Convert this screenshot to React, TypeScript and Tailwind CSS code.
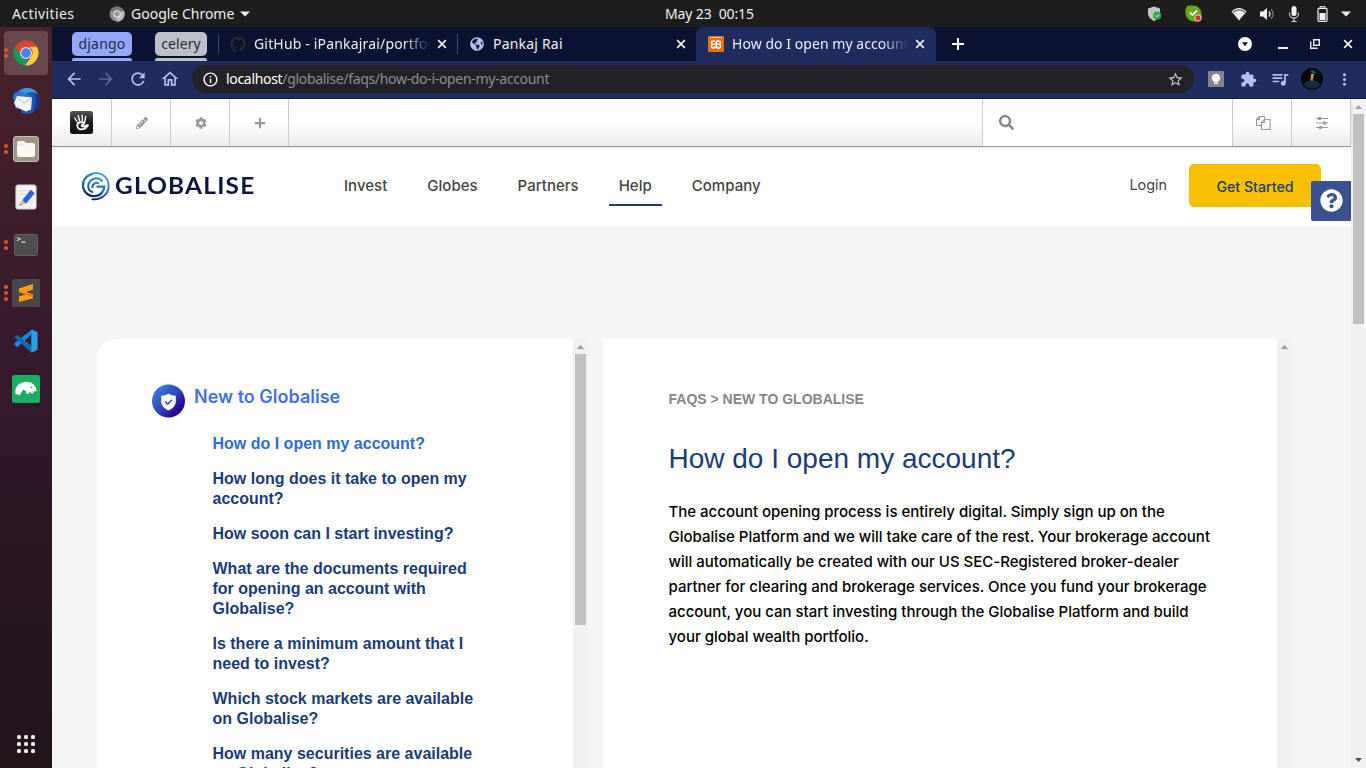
import React from "react";
import { FaGithub, FaPencilAlt, FaCog, FaPlus, FaSearch, FaQuestionCircle, FaGlobeAmericas } from "react-icons/fa";
import {
  MdArrowBack,
  MdArrowForward,
  MdRefresh,
  MdOutlineHome,
  MdInfoOutline,
  MdStarBorder,
  MdExtension,
  MdQueueMusic,
  MdMoreVert,
} from "react-icons/md";

const UI = "font-['Noto_Sans',sans-serif]";

function TopBar() {
  return (
    <div className={`flex h-[27px] shrink-0 items-center bg-[#1d1d1d] text-[14px] leading-[27px] text-[#f0f0f0] ${UI}`}>
      <div className="w-[109px] pl-3 tracking-[0.4px]">Activities</div>
      <svg className="mr-[6px] h-4 w-4" viewBox="0 0 16 16">
        <circle cx="8" cy="8" r="7.5" fill="#8d8d8d" />
        <path d="M8 8 1.5 4.3A7.5 7.5 0 0 1 14.5 4.3Z" fill="#777" />
        <path d="M8 8 14.8 4.6A7.5 7.5 0 0 1 7.6 15.5Z" fill="#bdbdbd" />
        <circle cx="8" cy="8" r="3.7" fill="#eee" />
        <circle cx="8" cy="8" r="2.8" fill="#999" />
      </svg>
      <div className="w-[104px] whitespace-nowrap tracking-[0px]">Google Chrome</div>
      <svg className="ml-[5px] h-[6px] w-[10px]" viewBox="0 0 10 6">
        <path d="M0 .5h10L5 5.5z" fill="#f0f0f0" />
      </svg>
      <div className="ml-[415px] w-[92px] whitespace-pre text-[14px] tracking-[-0.120px]">May 23  00:15</div>
      <div className="ml-auto flex items-center">
        <svg className="h-4 w-4" viewBox="0 0 16 16">
          <path d="M7 .5 13 2.5V7c0 4-3 6.500-6 8C4 13.500 1 11 1 7V2.500z" fill="#c4c4c4" />
          <circle cx="10.200" cy="9.500" r="4" fill="#2fa84a" />
          <path d="m8.500 9.500 1.300 1.300 2.300-2.400" stroke="#fff" fill="none" />
        </svg>
        <svg className="ml-[22px] h-[17px] w-[17px]" viewBox="0 0 17 17">
          <path d="M1 4.500Q1 1 4.500 1H8a7.500 7.500 0 0 1 8 8v3.500q0 3.500-3.500 3.500h-4A7.500 7.500 0 0 1 1 8.500z" fill="#66a818" stroke="#66a818" strokeLinejoin="round" />
          <path d="m5 7.500 2.500 2.500L12 5.500" stroke="#fff" strokeWidth="1.800" fill="none" />
          <circle cx="13" cy="13" r="3.200" fill="#e22" stroke="#fff" strokeWidth=".8" />
        </svg>
        <svg className="ml-[29px] h-[14px] w-4" viewBox="0 0 16 14">
          <path d="M.5 4.500C5-.2 11-.2 15.500 4.500L8 13.500z" fill="#f0f0f0" />
          <path d="M2 5.200C5.500 2 10.500 2 14 5.200" stroke="#555" strokeWidth="1.200" fill="none" />
        </svg>
        <svg className="ml-[12px] h-[14px] w-4" viewBox="0 0 16 14">
          <path d="M1 4.500h3L8 1v12L4 9.500H1z" fill="#f0f0f0" />
          <path d="M9.800 4.500c1.400 1.500 1.400 3.500 0 5" stroke="#eee" strokeWidth="1.300" fill="none" />
          <path d="M12 2.500c3 2.700 3 6.300 0 9" stroke="#888" strokeWidth="1.200" fill="none" />
        </svg>
        <svg className="ml-[14px] h-4 w-[10px]" viewBox="0 0 10 16">
          <rect x="2.500" y="0" width="5" height="10" rx="2.500" fill="#f0f0f0" />
          <path d="M.7 6.500v2c0 2.300 1.800 3.500 4.300 3.500s4.300-1.200 4.300-3.500v-2M5 12v3M2.500 15.400h5" stroke="#f0f0f0" fill="none" />
        </svg>
        <svg className="ml-[18px] h-4 w-[11px]" viewBox="0 0 11 16">
          <path d="M3 2V.7h5V2" stroke="#f0f0f0" fill="none" />
          <rect x="1" y="2.300" width="9" height="13" rx="1" stroke="#f0f0f0" strokeWidth="1.200" fill="none" />
          <rect x="2.500" y="7" width="6" height="7" fill="#f0f0f0" />
        </svg>
        <svg className="mr-[15px] ml-[13px] h-[6px] w-[10px]" viewBox="0 0 10 6">
          <path d="M0 .5h10L5 5.500z" fill="#f0f0f0" />
        </svg>
      </div>
    </div>
  );
}

function DockItem({ dots = 0, active = false, children }: { dots?: number; active?: boolean; children: React.ReactNode }) {
  return (
    <div className="flex h-12 w-[52px] items-center">
      <div className={`relative ml-[4px] flex h-11 w-11 items-center justify-center rounded-[4px] ${active ? "bg-[#68484d]" : ""}`}>
        <div className="absolute left-0 flex flex-col gap-[2px]">
          {Array.from({ length: dots }, (_, i) => (
            <span key={i} className="h-1 w-1 rounded-full bg-[#e95420]" />
          ))}
        </div>
        {children}
      </div>
    </div>
  );
}

function Dock() {
  return (
    <div className="flex w-[52px] shrink-0 flex-col bg-linear-to-b from-[#48222a] via-[#35192c] via-45% to-[#20141b] pt-[2px]">
      <DockItem dots={2} active>
        <svg className="h-[26px] w-[26px]" viewBox="0 0 48 48">
          <path d="M24 24 4 12.500A23 23 0 0 1 44 12.500L24 13z" fill="#db4437" />
          <path d="M24 1a23 23 0 0 1 20 11.500H24A11.500 11.500 0 0 0 13.500 29L4 12.500A23 23 0 0 1 24 1z" fill="#db4437" />
          <path d="M4 12.500 14 29.800A11.500 11.500 0 0 0 27 35L22 47A23 23 0 0 1 4 12.500z" fill="#0f9d58" />
          <path d="M44 12.500A23 23 0 0 1 22 47L34 29.800A11.500 11.500 0 0 0 30 13V12.500z" fill="#ffcd40" />
          <circle cx="24" cy="24" r="11" fill="#f1f1f1" />
          <circle cx="24" cy="24" r="9" fill="#4285f4" />
        </svg>
      </DockItem>
      <DockItem>
        <svg className="h-7 w-7" viewBox="0 0 28 28">
          <circle cx="14.500" cy="14" r="13" fill="#1c5ab0" />
          <path d="M6 5C12-1 22 0 26 7c-6-3-10-2-14 1z" fill="#3a9be0" />
          <path d="M20 27C30 21 29 9 22 5c3 6 2 14-2 22z" fill="#17329a" />
          <path d="M1 12C0 8 4 3 9 5l12 5-8 2z" fill="#2977cc" />
          <path d="M0 15h3v7h6v6H0z" fill="#40202c" />
          <path d="m2 16 3-7 15 1.500-1 12-5 2L4 20z" fill="#f3f3f3" />
          <path d="m5 10.500 7 5.500 8-5" stroke="#bbb" fill="none" />
        </svg>
      </DockItem>
      <DockItem dots={2}>
        <svg className="h-[26px] w-[26px]" viewBox="0 0 26 26">
          <rect x=".5" y=".5" width="25" height="25" rx="2.500" fill="#9e9684" stroke="#c4beb2" />
          <path d="M4 7q0-2 2-2h5l2 2h7q2 0 2 2v10q0 2-2 2H6q-2 0-2-2z" fill="#faf8f5" />
          <path d="M4 9h6l2-2" stroke="#ddd8ce" fill="none" />
        </svg>
      </DockItem>
      <DockItem>
        <svg className="h-[26px] w-[24px]" viewBox="0 0 24 27">
          <rect x="1.500" y="1" width="21" height="25" rx="2" fill="#f2f2f2" stroke="#ccc" />
          <path d="M4 7h15M4 11h15M4 15h15M4 19h15" stroke="#dedede" />
          <path d="m8 17 9-11 4 3.500-9 11z" fill="#2e61d8" />
          <path d="m8 17 4 3.500-7 2z" fill="#e8b87b" />
          <path d="m4 22.500 2.500-1.800.8.700z" fill="#333" />
        </svg>
      </DockItem>
      <DockItem dots={2}>
        <svg className="h-[22px] w-[24px]" viewBox="0 0 25 23">
          <rect x=".5" y=".5" width="24" height="22" rx="2" fill="#4d4d4d" stroke="#686868" />
          <path d="m3 3.500 3.500 1.800L3 7.200M7.500 8.500H12" stroke="#ddd" strokeWidth="1.100" fill="none" />
        </svg>
      </DockItem>
      <DockItem dots={3}>
        <svg className="h-7 w-7" viewBox="0 0 28 28">
          <rect width="28" height="28" rx="1.500" fill="#484848" />
          <path d="M7 9.500 21 5v5.500l-7 2.500 7 2.200v4L7 23v-5.500l7-2.300-7-2.200z" fill="#ff9c1a" />
          <path d="m7 13 14 2.200v2.500L7 13.600z" fill="#d97b09" />
        </svg>
      </DockItem>
      <DockItem>
        <svg className="h-[24px] w-[26px]" viewBox="0 0 26 25">
          <path d="M19.500.5 18.500 6 4 19l-3-2.500v-1.800z" fill="#1c8ad4" />
          <path d="M1 8.500 4 6l15 12-.5 6.500z" fill="#0b6ab0" />
          <path d="m18.500.3 6.500 3v18.400l-6.500 3z" fill="#2ba0ee" />
        </svg>
      </DockItem>
      <DockItem>
        <svg className="h-7 w-7" viewBox="0 0 28 28">
          <rect width="28" height="28" rx="2.500" fill="#1aae63" />
          <path d="M3.500 19C2 10.500 9 6.500 15 6.700c5 0 9 3.500 9.700 8.800-1 1.500-2.300 1-3 .2l-.5 2.800-2-.2-1-2-1.500 2.700-2.700-.4V16l-3-1.500-3 5.500z" fill="#fff" />
          <circle cx="19.500" cy="12.500" r=".8" fill="#1aae63" />
        </svg>
      </DockItem>
      <div className="mt-auto mb-[15px] ml-[17px] grid w-[18px] grid-cols-3 gap-[3px]">
        {Array.from({ length: 9 }, (_, i) => (
          <span key={i} className="h-1 w-1 rounded-[1.500px] bg-[#ededed]" />
        ))}
      </div>
    </div>
  );
}

function Cross({ className }: { className: string }) {
  return (
    <svg className={`h-[10px] w-[10px] shrink-0 ${className}`} viewBox="0 0 10 10">
      <path d="m1.200 1.200 7.600 7.600M8.800 1.200 1.200 8.800" stroke="#f2f2f2" strokeWidth="1.700" />
    </svg>
  );
}

function TabStrip() {
  return (
    <div className={`flex h-[34px] bg-[#0c1231] text-[14px] text-[#eef0f8] ${UI}`}>
      <div className="ml-5 flex w-[60px] flex-col pt-[5px] text-[#242a3d]">
        <div className="h-6 rounded-[5px] bg-[#93a7fb] text-center leading-[23px] tracking-[0.2px]">django</div>
        <div className="mt-[2px] h-[3px] rounded-t-[2px] bg-[#93a7fb]" />
      </div>
      <div className="ml-[23px] flex w-[52px] flex-col pt-[5px] text-[#2c2d33]">
        <div className="h-6 rounded-[5px] bg-[#bdc0c9] text-center leading-[23px] tracking-[0.1px]">celery</div>
        <div className="mt-[2px] h-[3px] rounded-t-[2px] bg-[#bdc0c9]" />
      </div>
      <div className="mt-[7px] ml-[11px] h-5 w-px bg-[#464b64]" />
      <div className="flex h-[34px] w-[238px] items-center pl-[11px]">
        <FaGithub className="text-[#24292e]" size={16} />
        <div className="ml-2 w-[176px] overflow-hidden pb-px whitespace-nowrap mask-r-from-85% mask-r-to-100% tracking-[0.170px]">GitHub - iPankajrai/portfolio</div>
        <Cross className="ml-[7px]" />
      </div>
      <div className="mt-[7px] h-5 w-px bg-[#464b64]" />
      <div className="flex h-[34px] w-[238px] items-center pl-[12px]">
        <span className="flex h-[14px] w-[14px] items-center justify-center rounded-full text-[#b3c1ef]">
          <FaGlobeAmericas size={14} />
        </span>
        <div className="ml-[9px] w-[180px] pb-px tracking-[0.2px]">Pankaj Rai</div>
        <Cross className="ml-[3px]" />
      </div>
      <div className="flex h-[34px] w-[240px] items-center rounded-t-[8px] bg-[#212c5e] pl-3">
        <svg className="h-4 w-4" viewBox="0 0 16 16">
          <rect width="16" height="16" rx="1" fill="#f26b0c" />
          <path d="M2 1.500h12" stroke="#ffc49c" />
          <path d="M7 5H5Q3.500 5 3.500 6.500T5 8.300h6q1.500-.3 1.500-1.800T11 5H9.500Q8.200 5 8.200 6.500v3.700M5 8.300q-1.500.4-1.500 2T5 12.200q1.800 0 1.800-1.600M11 8.300q1.500.4 1.500 2T11 12.200q-2.700 0-2.700-2" stroke="#fff" strokeWidth="1.600" fill="none" />
        </svg>
        <div className="ml-2 w-[176px] overflow-hidden pb-px whitespace-nowrap mask-r-from-85% mask-r-to-100% tracking-[0.050px]">How do I open my account?</div>
        <Cross className="ml-[7px]" />
      </div>
      <div className="flex flex-1 items-center">
        <svg className="ml-[16px] h-3 w-3" viewBox="0 0 12 12">
          <path d="M0 6h12M6 0v12" stroke="#fff" strokeWidth="2" />
        </svg>
        <div className="ml-auto flex items-center pr-[13px]">
          <svg className="h-[14px] w-[14px]" viewBox="0 0 14 14">
            <circle cx="7" cy="7" r="7" fill="#fff" />
            <path d="M4 5.200h6L7 9.200z" fill="#0c1231" />
          </svg>
          <div className="mt-[8px] ml-[26px] h-[2px] w-[10px] bg-[#eee]" />
          <svg className="ml-[22px] h-[10px] w-[10px]" viewBox="0 0 10 10">
            <path d="M3.700.7h5.600v5.600H3.700z" stroke="#eee" strokeWidth="1.400" fill="none" />
            <path d="M.7 2.500v6.800h6.800" stroke="#eee" strokeWidth="1.400" fill="none" />
          </svg>
          <Cross className="ml-[23px]" />
        </div>
      </div>
    </div>
  );
}

function Toolbar() {
  return (
    <div className={`flex h-[38px] items-center border-b border-[#141b42] bg-[#212c5e] pb-px text-[#b3c1ef] ${UI}`}>
      <div className="flex w-[140px] items-center gap-3 pl-[12px]">
        <MdArrowBack size={20} />
        <MdArrowForward size={20} className="text-[#5c699c]" />
        <MdRefresh size={20} />
        <MdOutlineHome size={20} />
      </div>
      <div className="flex h-7 w-[1002px] items-center rounded-full bg-[#222126] px-[10px]">
        <MdInfoOutline size={17} className="text-white" />
        <div className="ml-[7px] flex-1 pb-px text-[14px] tracking-[-0.320px] text-[#8f8f93]">
          <span className="text-white">localhost</span>/globalise/faqs/how-do-i-open-my-account
        </div>
        <MdStarBorder size={17} className="text-[#c8c8ca]" />
      </div>
      <div className="flex flex-1 items-center pl-[14px]">
        <svg className="h-4 w-4" viewBox="0 0 16 16">
          <rect width="16" height="16" rx="1" fill="#81868c" />
          <circle cx="8" cy="7" r="4.200" fill="#fff" />
          <path d="M6 10h4v3H6z" fill="#fff" />
          <path d="M5.500 11.500h5" stroke="#81868c" strokeWidth=".7" />
        </svg>
        <MdExtension size={17} className="ml-4" />
        <MdQueueMusic size={20} className="ml-[13px]" />
        <svg className="ml-[11px] h-[22px] w-[22px]" viewBox="0 0 22 22">
          <circle cx="11" cy="11" r="11" fill="#050608" />
          <path d="M3 17c1-4 4-4 7-5 4 0 8 1 9 5-4 5-12 5-16 0z" fill="#0e3038" />
          <path d="m9 3 3-1 4 3-4 1z" fill="#15545c" />
          <path d="m10 6 3 0-.5 3-1 4-2-1z" fill="#d98e55" />
        </svg>
        <MdMoreVert size={19} className="ml-[12px]" />
      </div>
    </div>
  );
}

function CmsBar() {
  const cell = "flex h-full items-center justify-center border-r border-[#ccc] pl-[2px]";
  return (
    <div className="relative z-10 flex h-12 shrink-0 border-b border-[#999] bg-linear-to-b from-white from-50% to-[#ebebeb] text-[#999] shadow-[0_1px_3px_rgba(0,0,0,0.12)]">
      <div className="flex h-full w-[60px] items-center justify-center border-r border-[#ccc]">
        <svg className="h-[23px] w-[23px]" viewBox="0 0 23 23">
          <defs>
            <linearGradient id="hand" x2="0" y2="1">
              <stop stopColor="#555" />
              <stop offset=".5" stopColor="#1c1c1c" />
              <stop offset="1" stopColor="#111" />
            </linearGradient>
          </defs>
          <rect width="23" height="23" rx="2.500" fill="url(#hand)" />
          <path d="M7.200 11 4.700 7M9.600 10 8.300 4.800M12.200 10V4.200M14.700 10.500l1-5" stroke="#fff" strokeWidth="1.400" strokeLinecap="round" fill="none" />
          <path d="M14.500 11.800C12 10.800 7.500 11 7.300 14.200c0 2.700 1.700 4.200 4.300 4.200 3 0 4.700-1.500 6.400-4.200-1.800-.2-2.900 1.300-4.700 1.300-2.300 0-2.300-1.800.3-2.100" stroke="#fff" strokeWidth="1.800" strokeLinejoin="round" strokeLinecap="round" fill="none" />
        </svg>
      </div>
      <div className={`${cell} w-[59px]`}><FaPencilAlt size={12} /></div>
      <div className={`${cell} w-[59px]`}><FaCog size={12} /></div>
      <div className={`${cell} w-[59px]`}><FaPlus size={12} /></div>
      <div className="flex-1 border-r border-[#ccc]" />
      <div className="flex w-[250px] items-center border-r border-[#ccc] bg-white pl-4 text-[#858585]"><FaSearch size={15} /></div>
      <div className={`${cell} w-[59px]`}>
        <svg className="h-[14px] w-[15px]" viewBox="0 0 15 14" fill="none" stroke="#999" strokeWidth="1.100">
          <path d="M5.500 9.500h-5v-6l3-3h5v3M.5 3.500h3v-3" />
          <path d="M5.500 13.500v-7l3-3h5.500v10zM5.500 6.500h3v-3" />
        </svg>
      </div>
      <div className={`${cell} w-[59px]`}>
        <svg className="h-[12px] w-[12px]" viewBox="0 0 12 12" fill="#999">
          <path d="M0 1h12v1H0zM0 5.500h12v1H0zM0 10h12v1H0zM2 0h3v3H2zM7 4.500h3v3H7zM3 9h3v3H3z" />
        </svg>
      </div>
    </div>
  );
}

function Header() {
  const links = ["Invest", "Globes", "Partners", "Help", "Company"];
  return (
    <div className="flex h-[79px] shrink-0 bg-white font-['Inter',sans-serif] text-[15px] font-medium text-[#444]">
      <div className="mt-[24px] ml-[30px] flex h-[30px] w-[252px] items-center">
        <svg className="h-[29px] w-[28px] shrink-0" viewBox="0 0 28 29" fill="none" stroke="url(#mark)" strokeLinecap="round">
          <defs>
            <linearGradient id="mark" gradientUnits="userSpaceOnUse" x1="20" y1="2" x2="9" y2="27">
              <stop stopColor="#3d9cf5" />
              <stop offset=".5" stopColor="#2a6fbf" />
              <stop offset="1" stopColor="#0b1b48" />
            </linearGradient>
          </defs>
          <path d="M7.500 3A12.500 12.500 0 0 1 26.600 13C27.200 21 20.500 28 10.500 27.300" strokeWidth="1.900" />
          <path d="M10 2.200C3 4 0 9.500 1.200 15.500 2.500 21 7 24.500 12.500 24.200 18.500 24 22.200 19.500 22.300 14.600H14.500" strokeWidth="2.300" strokeLinecap="butt" />
          <path d="M20.600 9.600A8 8 0 0 0 6.700 11.500C5 15.500 7 19.500 11 20.300M17 11.500A4.500 4.500 0 0 0 10.300 15.800" strokeWidth="2" strokeLinecap="butt" />
        </svg>
        <span className="-mt-[2px] ml-[4.500px] origin-left scale-x-[1.06] font-['Lato',sans-serif] text-[23px] font-bold tracking-[1.150px] text-[#0b1640]">GLOBALISE</span>
      </div>
      <nav className="mt-[23px] flex h-[36px] gap-5">
        {links.map((l) => (
          <a key={l} className={`flex h-9 items-start px-[10px] pt-[6px] leading-[20px] tracking-[0.015px] ${l === "Help" ? "border-b-2 border-[#1d3c78]" : ""}`}>{l}</a>
        ))}
      </nav>
      <div className="ml-auto flex pr-[30px]">
        <div className="mt-[28px] mr-[22px] text-[14.400px] leading-5 font-normal">Login</div>
        <button className="mt-[17px] h-[43px] w-[132px] rounded-[5px] bg-[#f6c000] pt-[2px] text-[14.200px] font-medium text-[#1c3f6e]">Get Started</button>
      </div>
    </div>
  );
}

function ScrollBar({ thumb, down }: { thumb?: string; down?: boolean }) {
  return (
    <div className="flex w-[15px] shrink-0 flex-col items-center bg-[#f1f1f1]">
      <svg className="h-[15px] w-[15px] shrink-0" viewBox="0 0 15 15">
        <path d="M4 10 7.500 6 11 10z" fill="#9f9f9f" />
      </svg>
      {thumb && <div className={`w-[11px] bg-[#c1c1c1] ${thumb}`} />}
      {down && (
        <svg className="mt-auto h-[15px] w-[15px] shrink-0" viewBox="0 0 15 15">
          <path d="M4 5 7.500 9 11 5z" fill="#505050" />
        </svg>
      )}
    </div>
  );
}

const questions = [
  "How do I open my account?",
  "How long does it take to open my account?",
  "How soon can I start investing?",
  "What are the documents required for opening an account with Globalise?",
  "Is there a minimum amount that I need to invest?",
  "Which stock markets are available on Globalise?",
  "How many securities are available on Globalise?",
];

function Content() {
  return (
    <div className="flex min-h-0 flex-1 gap-[15px] overflow-hidden pt-[113px] pl-[45px]">
      <div className="flex w-[491px] overflow-hidden rounded-tl-[20px] bg-white font-['Liberation_Sans',sans-serif]">
        <div className="flex-1 overflow-hidden pt-[45px] pl-[55px]">
          <div className="flex h-[34px]">
            <svg className="h-[34px] w-[33px]" viewBox="0 0 34 34">
              <defs>
                <linearGradient id="badge" x2="1" y2="1">
                  <stop stopColor="#3b8be6" />
                  <stop offset=".5" stopColor="#2c4bb8" />
                  <stop offset=".8" stopColor="#2a0090" />
                </linearGradient>
              </defs>
              <circle cx="17" cy="17" r="17" fill="url(#badge)" />
              <path d="M17 9.500q3 2 7.500 2v5.500c0 5-3.500 8-7.500 9.700-4-1.700-7.500-4.700-7.500-9.700v-5.500q4.500 0 7.500-2z" fill="#fff" />
              <path d="m13.500 17.500 2.700 2.700 4.500-4.500" stroke="#2c4bb8" strokeWidth="1.500" fill="none" />
            </svg>
            <h2 className="ml-[9px] font-['Inter',sans-serif] text-[18px] leading-[25px] font-semibold text-[#4571e3]">New to Globalise</h2>
          </div>
          <ul className="mt-[16px] ml-[60.500px] flex w-[272px] flex-col gap-[15px] text-[16px] leading-5 font-bold text-[#1b3b78]">
            {questions.map((q, i) => (
              <li key={q} className={i === 0 ? "text-[#2e6bdb]" : ""}>{q}</li>
            ))}
          </ul>
        </div>
        <ScrollBar thumb="h-[271px] shrink-0" />
      </div>
      <div className="flex w-[689px] bg-white">
        <div className="flex-1 pt-[50px] pl-[65.500px]">
          <div className="font-['Liberation_Sans',sans-serif] text-[14px] leading-5 font-bold text-[#868686]">FAQS &gt; NEW TO GLOBALISE</div>
          <h1 className="mt-[30px] font-['Liberation_Sans',sans-serif] text-[28px] leading-10 text-[#1b3b78]">How do I open my account?</h1>
          <p className="mt-[20px] w-[546px] font-['Inter',sans-serif] text-[15px] leading-[25px] font-medium tracking-[-0.010px] text-black">
            The account opening process is entirely digital. Simply sign up on the Globalise Platform and we will take care of the rest. Your brokerage account will automatically be created with our US SEC-Registered broker-dealer partner for clearing and brokerage services. Once you fund your brokerage account, you can start investing through the Globalise Platform and build your global wealth portfolio.
          </p>
        </div>
        <ScrollBar />
      </div>
    </div>
  );
}

export default function App() {
  return (
    <div className="flex h-[768px] w-[1366px] flex-col overflow-hidden">
      <TopBar />
      <div className="flex min-h-0 flex-1">
        <Dock />
        <div className="flex min-w-0 flex-1 flex-col">
          <TabStrip />
          <Toolbar />
          <div className="flex min-h-0 flex-1">
            <div className="relative flex min-w-0 flex-1 flex-col bg-[#f5f5f5]">
              <CmsBar />
              <Header />
              <Content />
              <div className="absolute top-[82px] right-0 z-20 flex h-10 w-10 items-center justify-center rounded-l-[2px] bg-[#3a518f] pb-px text-white">
                <FaQuestionCircle size={23} />
              </div>
            </div>
            <ScrollBar thumb="h-[210px]" down />
          </div>
        </div>
      </div>
    </div>
  );
}
